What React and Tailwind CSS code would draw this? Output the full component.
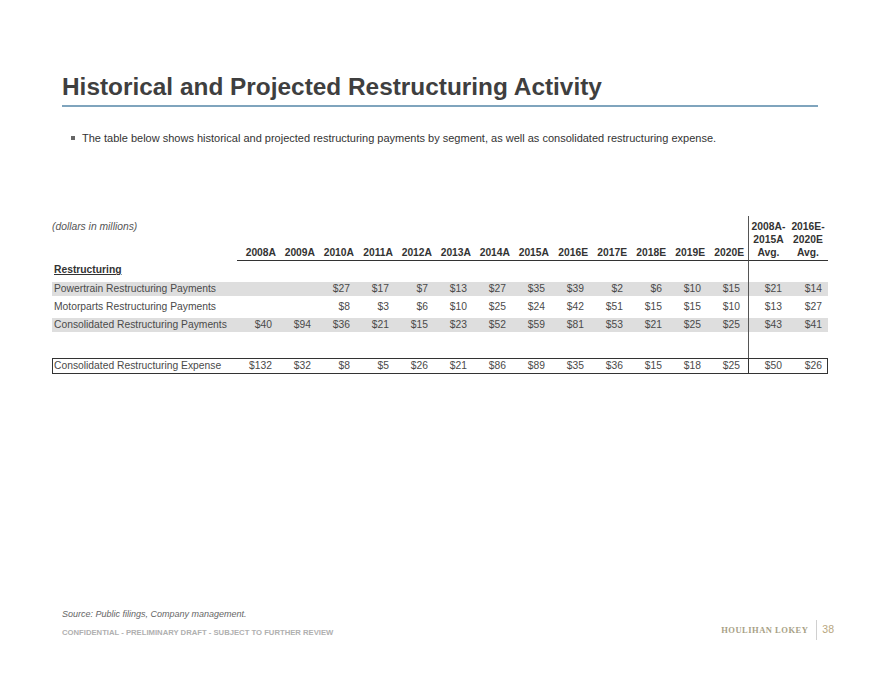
const years = ['2008A', '2009A', '2010A', '2011A', '2012A', '2013A', '2014A', '2015A', '2016E', '2017E', '2018E', '2019E', '2020E']

const rows = [
  { label: 'Powertrain Restructuring Payments', vals: [null, null, 27, 17, 7, 13, 27, 35, 39, 2, 6, 10, 15], avgs: [21, 14], band: true },
  { label: 'Motorparts Restructuring Payments', vals: [null, null, 8, 3, 6, 10, 25, 24, 42, 51, 15, 15, 10], avgs: [13, 27], band: false },
  { label: 'Consolidated Restructuring Payments', vals: [40, 94, 36, 21, 15, 23, 52, 59, 81, 53, 21, 25, 25], avgs: [43, 41], band: true },
]

const expense = { label: 'Consolidated Restructuring Expense', vals: [132, 32, 8, 5, 26, 21, 86, 89, 35, 36, 15, 18, 25], avgs: [50, 26] }

const money = (v) => (v == null ? '' : `$${v}`)

const DataRow = ({ label, vals, avgs, band }) => (
  <div className="flex h-[18px]">
    <div className="w-[696px] pt-[3px] pb-[1px]">
      <div className={`flex h-full items-center ${band ? 'bg-[#dedede]' : ''}`}>
        <div className="w-[185px] pl-[2px]">{label}</div>
        {vals.map((v, i) => (
          <div key={i} className="w-[39px] text-right pr-[4px]">{money(v)}</div>
        ))}
      </div>
    </div>
    <div className="w-[80px] border-l border-[#555] pt-[3px] pb-[1px]">
      <div className={`flex h-full items-center ${band ? 'bg-[#dedede]' : ''}`}>
        <div className="w-[39px] text-right pr-[6px]">{money(avgs[0])}</div>
        <div className="w-[40px] text-right pr-[6px]">{money(avgs[1])}</div>
      </div>
    </div>
  </div>
)

export default function App() {
  return (
    <div className="w-[880px] h-[680px] bg-white flex flex-col font-['Liberation_Sans',Arial,sans-serif] overflow-hidden">
      {/* Title */}
      <div className="pt-[73px] px-[62px]">
        <h1 className="text-[24.4px] leading-[28px] font-bold text-[#3f3f3f]">
          Historical and Projected Restructuring Activity
        </h1>
        <div className="mt-[4px] h-[2px] w-[756px] bg-[#7fa4bd]" />
        <div className="mt-[24px] flex items-center text-[11px] leading-[14px] text-[#333]">
          <div className="ml-[9px] w-[4px] h-[4px] bg-[#666]" />
          <span className="ml-[7px]">
            The table below shows historical and projected restructuring payments by segment, as well as consolidated restructuring expense.
          </span>
        </div>
      </div>

      {/* Table */}
      <div className="mt-[71px] ml-[52px] w-[776px] text-[10.3px] text-[#4a4a4a]">
        {/* header */}
        <div className="flex">
          <div className="w-[696px] flex">
            <div className="w-[185px] pt-[4px] leading-[13px] italic text-[#555]">(dollars in millions)</div>
            <div className="w-[511px] flex items-end border-b border-[#333] pb-[1px]">
              {years.map((y) => (
                <div key={y} className="w-[39px] text-right leading-[13px] font-bold text-[#333]">{y}</div>
              ))}
            </div>
          </div>
          <div className="w-[80px] border-l border-[#555] border-b border-b-[#333] pt-[4px] pb-[1px] flex leading-[13px] font-bold text-[#333]">
            <div className="w-[39px] text-center">2008A-<br />2015A<br />Avg.</div>
            <div className="w-[40px] text-center">2016E-<br />2020E<br />Avg.</div>
          </div>
        </div>

        {/* section title */}
        <div className="flex h-[18px]">
          <div className="w-[696px] flex items-center pl-[2px]">
            <span className="font-bold underline text-[#333]">Restructuring</span>
          </div>
          <div className="w-[80px] border-l border-[#555]" />
        </div>

        {rows.map((r) => (
          <DataRow key={r.label} {...r} />
        ))}

        {/* spacer */}
        <div className="flex h-[25px]">
          <div className="w-[696px]" />
          <div className="w-[80px] border-l border-[#555]" />
        </div>

        {/* expense box */}
        <div className="flex h-[16px]">
          <div className="w-[696px] flex items-center border-y border-l border-[#333]">
            <div className="w-[184px] pl-[1px]">{expense.label}</div>
            {expense.vals.map((v, i) => (
              <div key={i} className="w-[39px] text-right pr-[4px]">{money(v)}</div>
            ))}
          </div>
          <div className="w-[80px] flex items-center border border-[#333]">
            <div className="w-[39px] text-right pr-[6px]">{money(expense.avgs[0])}</div>
            <div className="w-[39px] text-right pr-[5px]">{money(expense.avgs[1])}</div>
          </div>
        </div>
      </div>

      {/* Footer */}
      <div className="mt-auto px-[62px] pb-[42px] flex items-end justify-between">
        <div className="flex flex-col">
          <div className="text-[9px] leading-[11px] italic text-[#666]">Source: Public filings, Company management.</div>
          <div className="mt-[8px] text-[7.7px] leading-[10px] font-bold text-[#b0b0b0]">
            CONFIDENTIAL - PRELIMINARY DRAFT - SUBJECT TO FURTHER REVIEW
          </div>
        </div>
        <div className="flex items-center mb-[-2px] mr-[-16px]">
          <span className="font-['Liberation_Serif',serif] text-[8.5px] tracking-[0.5px] font-bold text-[#a89f86]">HOULIHAN LOKEY</span>
          <div className="ml-[8px] w-px h-[20px] bg-[#d0d0d0]" />
          <span className="ml-[5px] text-[10.5px] text-[#b8a67e]">38</span>
        </div>
      </div>
    </div>
  )
}
